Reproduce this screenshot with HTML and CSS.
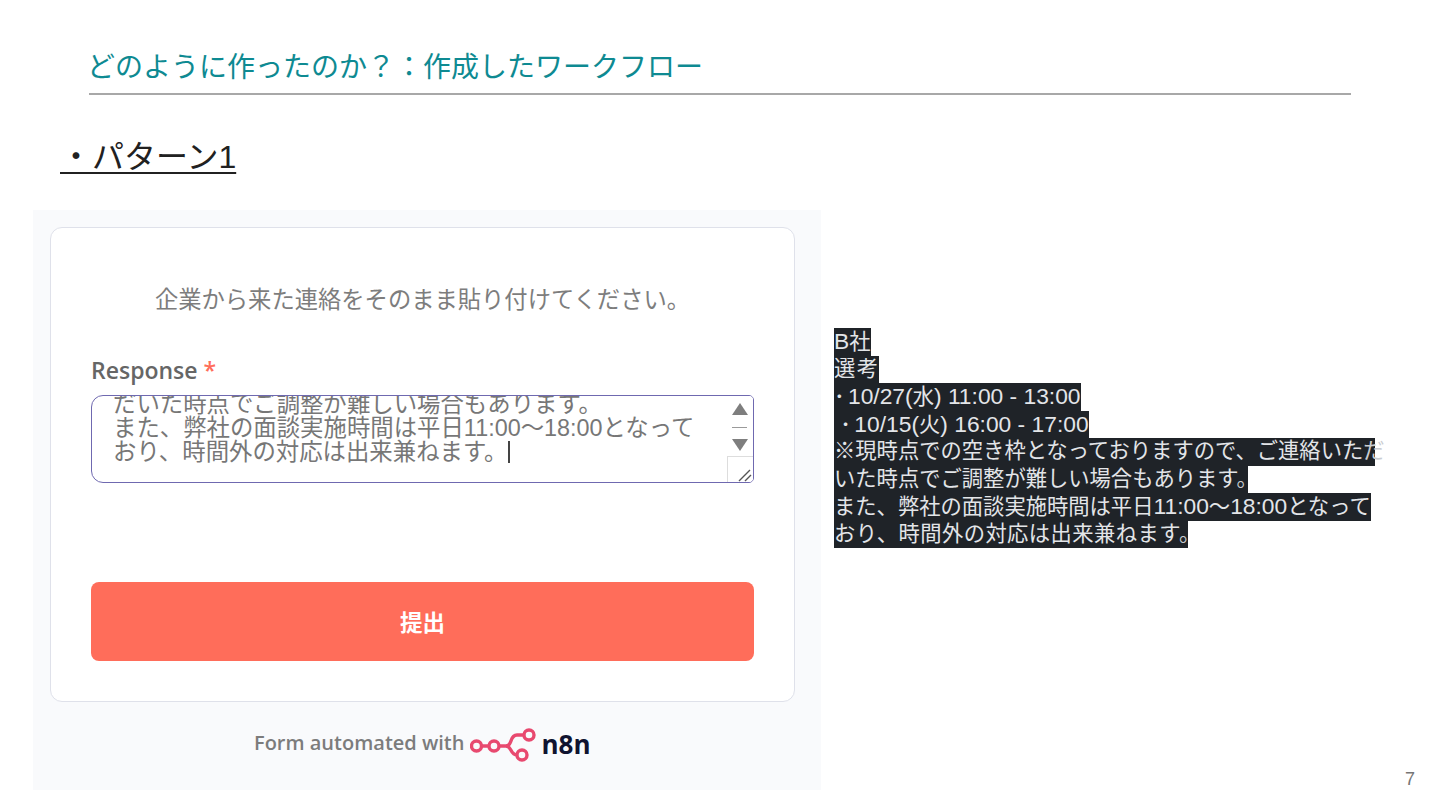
FILE: index.html
```html
<!DOCTYPE html>
<html lang="ja">
<head>
    <meta charset="UTF-8">
    <meta name="viewport" content="width=device-width, initial-scale=1.0">
    <title>どのように作ったのか？</title>
    <link rel="stylesheet" href="styles.css">
</head>
<body>

<div class="slide">
    <!-- Slide header -->
    <div class="header">
        <h1 class="title">どのように作ったのか？：作成したワークフロー</h1>
    </div>

    <h2 class="pattern">・パターン1</h2>

    <div class="content">
        <!-- Form screenshot -->
        <div class="form-panel">
            <div class="card">
                <p class="lead">企業から来た連絡をそのまま貼り付けてください。</p>
                <div class="label">Response <span class="star">*</span></div>
                <div class="textbox">
                    <div class="textbox-text">
                        だいた時点でご調整が難しい場合もあります。<br>
                        また、弊社の面談実施時間は平日11:00～18:00となって<br>
                        おり、時間外の対応は出来兼ねます。<span class="caret"></span>
                    </div>
                    <div class="scrollbar">
                        <span class="arrow-up"></span>
                        <span class="thumb"></span>
                        <span class="arrow-down"></span>
                    </div>
                    <div class="resizer">
                        <svg width="25" height="25" viewBox="0 0 25 25">
                            <path d="M11 24 L22 13 M17 24 L23 18" stroke="#555" stroke-width="1.4" fill="none"/>
                        </svg>
                    </div>
                </div>
                <button class="submit">提出</button>
            </div>
            <div class="credit">
                <span class="credit-text">Form automated with</span>
                <svg class="logo" width="66" height="36" viewBox="0 0 66 36">
                    <g fill="none" stroke="#e8496f" stroke-width="3.4">
                        <circle cx="6.5" cy="18" r="5"/>
                        <circle cx="24" cy="18" r="5"/>
                        <circle cx="59" cy="7" r="5"/>
                        <circle cx="52" cy="27" r="5"/>
                        <path d="M11.5 18 H19 M29 18 H36 C43 18 39 7 47 7 H54"/>
                        <path d="M36 18 C42 18 40 27 47 27"/>
                    </g>
                </svg>
                <span class="n8n">n8n</span>
            </div>
        </div>

        <!-- Pasted text -->
        <div class="notes">
            <div class="note-line"><span class="num">B</span>社</div>
            <div class="note-line wide">選考</div>
            <div class="note-line"><span class="dot">･</span><span class="num">10/27(</span>水<span class="num">) 11:00 - 13:00</span></div>
            <div class="note-line"><span class="num">&nbsp;</span><span class="dot">･</span><span class="num">10/15(</span>火<span class="num">) 16:00 - 17:00</span></div>
            <div class="note-line cut">※現時点での空き枠となっておりますので、ご連絡いた<span class="tail">だ</span></div>
            <div class="note-line cut">いた時点でご調整が難しい場合もあります<span class="tail">。</span></div>
            <div class="note-line">また、弊社の面談実施時間は平日<span class="num">11:00</span>～<span class="num">18:00</span>となって</div>
            <div class="note-line cut loose">おり、時間外の対応は出来兼ねます<span class="tail">。</span></div>
        </div>
    </div>

    <div class="page-number">7</div>
</div>

</body>
</html>
```

FILE: styles.css
```css
/* General Reset */
* {
    margin: 0;
    padding: 0;
    box-sizing: border-box;
}

body {
    font-family: 'Liberation Sans', 'Noto Sans CJK JP', sans-serif;
    background-color: #fff;
}

/* Slide */
.slide {
    position: relative;
    width: 1440px;
    height: 810px;
    overflow: hidden;
    background-color: #fff;
}

.header {
    margin: 0 89px;
    height: 95px;
    padding-top: 48px;
    border-bottom: 2px solid #a8a8a8;
}

.title {
    margin-left: -2px;
    font-size: 28px;
    font-weight: 400;
    line-height: 40px;
    color: #0e8a92;
}

.pattern {
    margin: 39px 0 0 60px;
    width: fit-content;
    font-size: 32px;
    font-weight: 400;
    line-height: 46px;
    color: #212121;
    text-decoration: underline;
    text-decoration-thickness: 2px;
    text-underline-offset: 4px;
}

.content {
    display: flex;
    margin: 30px 0 0 33px;
}

/* Form screenshot */
.form-panel {
    width: 788px;
    height: 580px;
    padding: 17px 26px 0 17px;
    background-color: #f9fafc;
}

.card {
    height: 475px;
    padding: 56px 40px 0;
    background-color: #fff;
    border: 1px solid #dfe1ea;
    border-radius: 12px;
}

.lead {
    font-size: 23.3px;
    line-height: 32px;
    text-align: center;
    color: #7d7d7d;
}

.label {
    margin-top: 38px;
    font-family: 'Open Sans', 'Noto Sans CJK JP', sans-serif;
    font-size: 23px;
    font-weight: 600;
    line-height: 32px;
    color: #666;
}

.star {
    color: #ff6d5a;
}

.textbox {
    position: relative;
    margin-top: 9px;
    width: 663px;
    height: 88px;
    overflow: hidden;
    border: 1px solid #6f69b0;
    border-radius: 12px 5px 5px 12px;
    background-color: #fff;
}

.textbox-text {
    margin: -4px 0 0 21px;
    font-size: 23.4px;
    line-height: 24px;
    color: #777;
    white-space: nowrap;
}

.caret {
    display: inline-block;
    width: 2px;
    height: 22px;
    margin-left: 1px;
    vertical-align: -3px;
    background-color: #444;
}

.scrollbar {
    position: absolute;
    top: 0;
    right: 0;
    bottom: 25px;
    width: 27px;
    padding-top: 7px;
    display: flex;
    flex-direction: column;
    align-items: center;
    background-color: #fff;
}

.arrow-up,
.arrow-down {
    width: 0;
    height: 0;
    border-left: 8.5px solid transparent;
    border-right: 8.5px solid transparent;
}

.arrow-up {
    border-bottom: 12px solid #7e7e7e;
}

.arrow-down {
    border-top: 12px solid #7e7e7e;
}

.thumb {
    width: 15px;
    height: 1px;
    margin: 12px 0 11px;
    background-color: #9a9a9a;
}

.resizer {
    position: absolute;
    right: 0;
    bottom: 0;
    width: 26px;
    height: 26px;
    background-color: #fff;
    border-left: 1px solid #ddd;
    border-top: 1px solid #ddd;
}

.submit {
    display: block;
    width: 663px;
    height: 79px;
    margin-top: 99px;
    padding-bottom: 2px;
    border: none;
    border-radius: 8px;
    background-color: #ff6d5a;
    color: #fff;
    font-family: 'Noto Sans CJK JP', sans-serif;
    font-size: 22.5px;
    font-weight: 700;
}

.credit {
    display: flex;
    align-items: center;
    margin: 24px 0 0 204px;
    height: 36px;
    font-family: 'Open Sans', sans-serif;
    font-size: 20px;
    font-weight: 600;
    color: #7c7c7c;
}

.credit-text {
    padding-bottom: 4px;
}

.logo {
    margin: 4px 0 0 6px;
}

.n8n {
    margin-left: 5px;
    font-size: 26px;
    font-weight: 700;
    color: #101330;
}

/* Pasted text */
.notes {
    margin: 118px 0 0 13px;
    font-size: 21.3px;
    line-height: 27.5px;
    color: #e3e5e8;
    white-space: nowrap;
}

.note-line {
    width: fit-content;
    height: 27.5px;
    background-color: #1f2328;
}

.note-line.cut {
    background: linear-gradient(#1f2328, #1f2328) no-repeat;
    background-size: calc(100% - 10px) 100%;
}

.note-line.wide {
    letter-spacing: 1.4px;
}

.note-line.loose {
    letter-spacing: 0.45px;
    background-size: calc(100% - 13px) 100%;
}

.num {
    font-size: 22.8px;
}

.dot {
    display: inline-block;
    width: 14px;
}

.tail {
    color: #c9ccd0;
}

.page-number {
    position: absolute;
    right: 25px;
    bottom: 20px;
    font-size: 18px;
    color: #757575;
}
```
